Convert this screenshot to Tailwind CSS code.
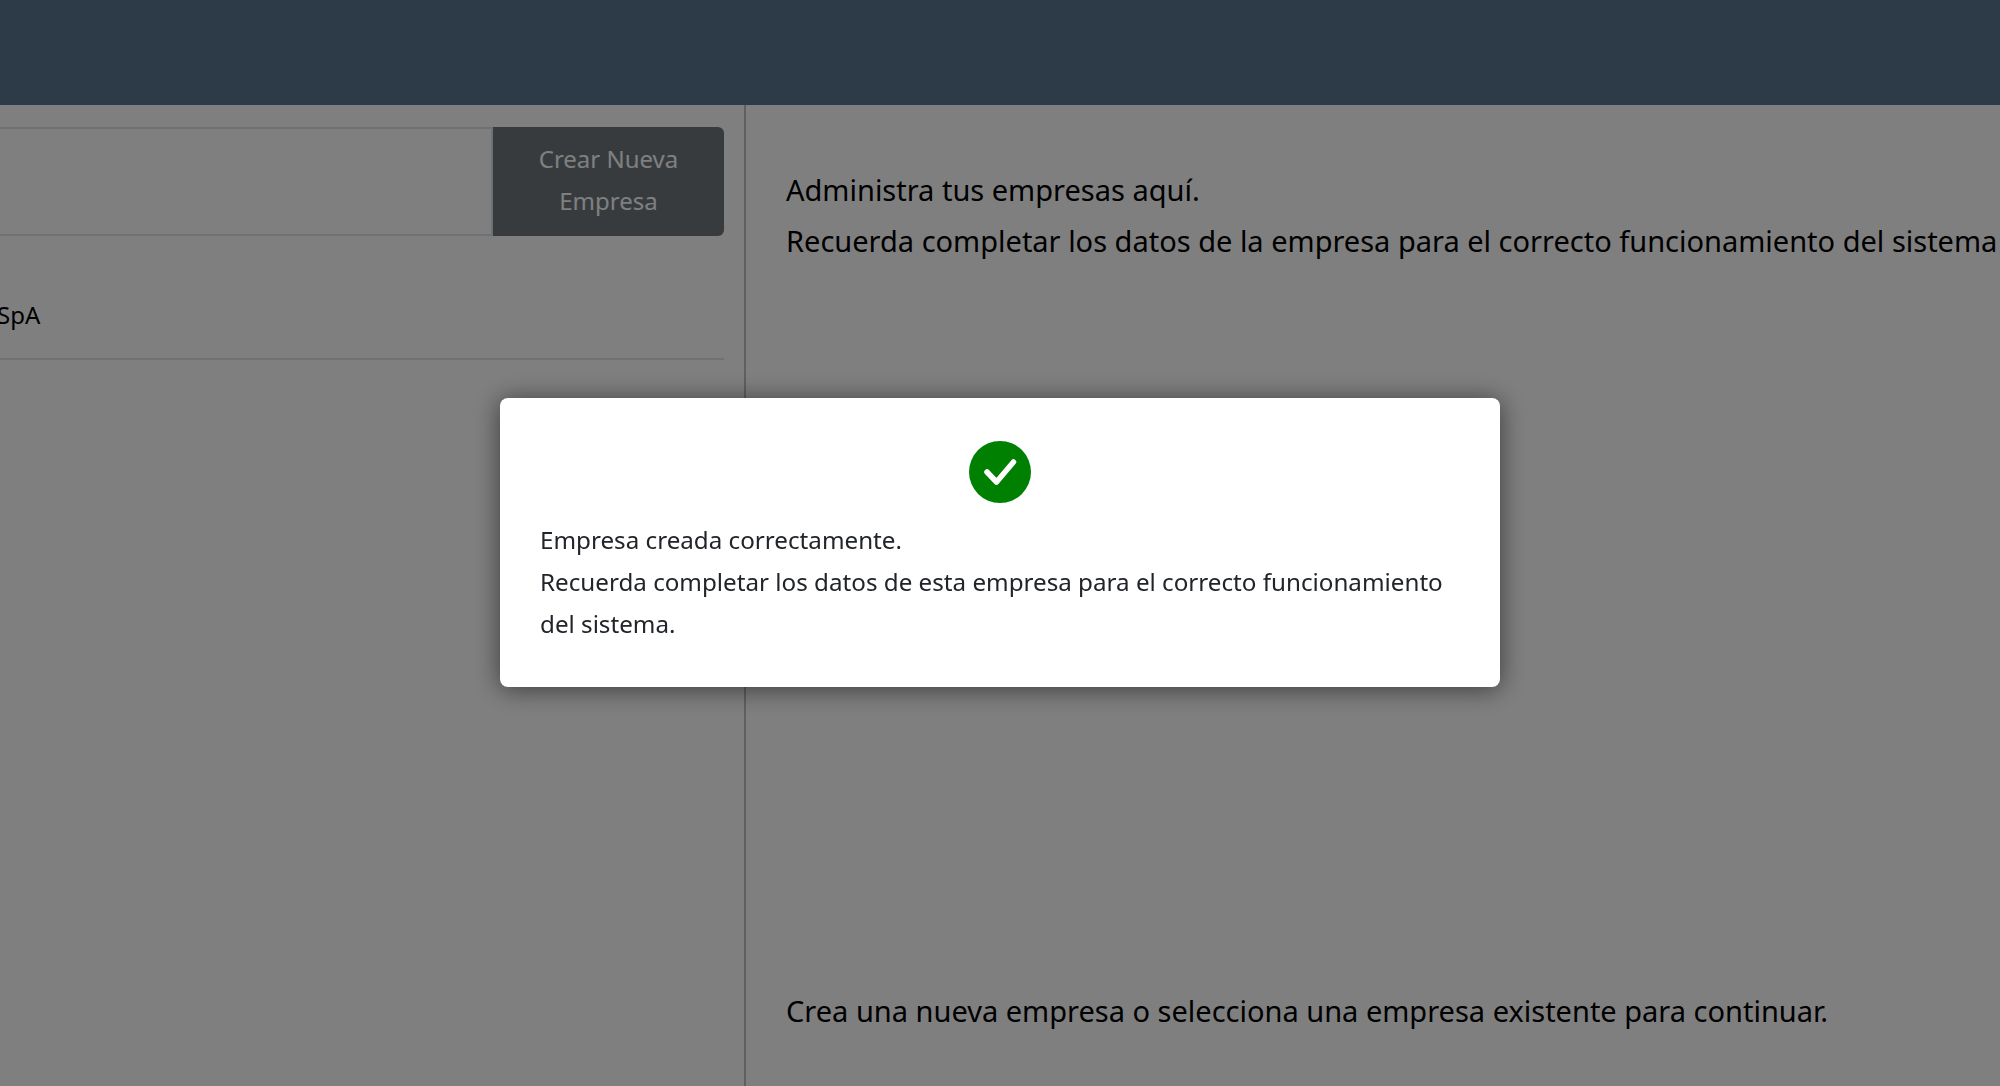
<!DOCTYPE html>
<html lang="es">
<head>
    <meta charset="UTF-8">
    <title>Empresas</title>
    <script src="https://cdn.jsdelivr.net/npm/@tailwindcss/browser@4"></script>
</head>
<body class="bg-white h-[1086px] overflow-hidden font-['Noto_Sans',sans-serif]">

    <!-- Top bar -->
    <header class="h-[105px] bg-[#5a7590]"></header>

    <main class="flex h-[981px]">
        <!-- Company list -->
        <section class="w-[746px] shrink-0 border-r-2 border-[#c0c0c0] pt-[22px] pr-5 overflow-hidden">
            <div class="flex h-[109px] -ml-10">
                <div class="flex-1 border-2 border-[#dee2e6] rounded-l-md"></div>
                <button class="w-[231px] bg-[#6f767d] rounded-r-md text-white text-[24px] leading-[42px] pb-[4px]">Crear Nueva<br>Empresa</button>
            </div>
            <div class="h-[124px] flex items-center border-b-2 border-[#dee2e6] text-[24px] text-black pt-[36px] -ml-[3px]">SpA</div>
        </section>

        <!-- Info -->
        <section class="flex-1 flex flex-col justify-between pl-[40px] pt-[59px] pb-[50px] text-[29px] leading-[51px] text-black whitespace-nowrap">
            <div>
                <p>Administra tus empresas aquí.</p>
                <p>Recuerda completar los datos de la empresa para el correcto funcionamiento del sistema</p>
            </div>
            <p>Crea una nueva empresa o selecciona una empresa existente para continuar.</p>
        </section>
    </main>

    <!-- Success modal -->
    <div class="fixed inset-0 bg-black/50 flex items-start justify-center pt-[398px]">
        <div class="w-[1000px] h-[289px] bg-white rounded-lg shadow-[0_2px_26px_rgba(0,0,0,0.55)] px-10 pt-[43px] text-[#212529] text-[24.2px] leading-[42px]">
            <svg class="block mx-auto mb-[16px]" width="62" height="62" viewBox="0 0 62 62">
                <circle cx="31" cy="31" r="31" fill="#008000"/>
                <path d="M18 31 L27.5 41 L44.5 21" fill="none" stroke="#fff" stroke-width="5.5" stroke-linecap="round" stroke-linejoin="round"/>
            </svg>
            <p>Empresa creada correctamente.</p>
            <p>Recuerda completar los datos de esta empresa para el correcto funcionamiento del sistema.</p>
        </div>
    </div>
</body>
</html>
